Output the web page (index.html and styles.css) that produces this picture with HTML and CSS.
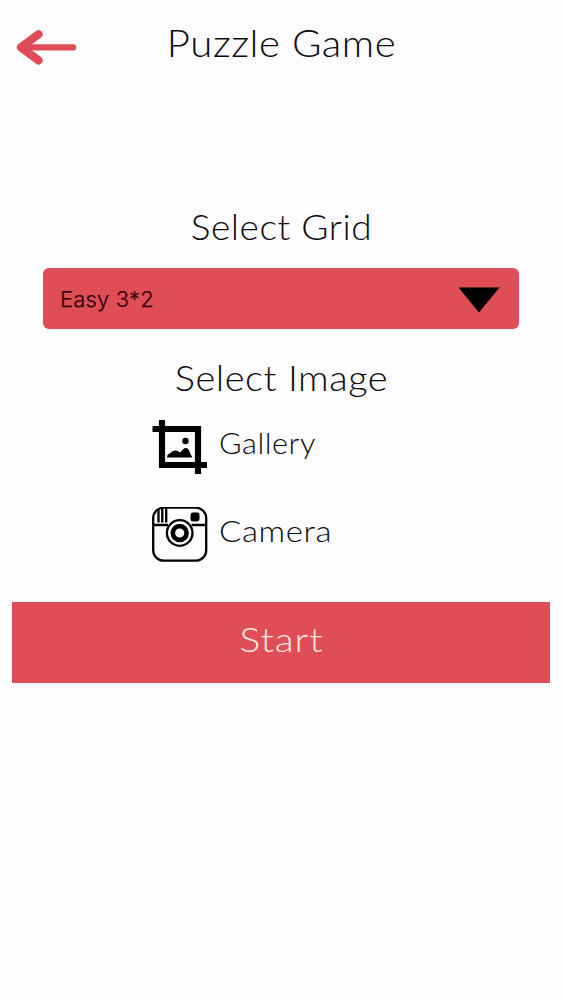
FILE: index.html
```html
<!DOCTYPE html>
<html lang="en">
<head>
<meta charset="utf-8">
<title>Puzzle Game</title>
<link rel="stylesheet" href="styles.css">
</head>
<body>
<main class="screen">
  <header class="header">
    <button class="back" aria-label="Back">
      <svg width="62" height="36" viewBox="0 0 62 36" fill="none" stroke="#df4c57" stroke-linecap="round" stroke-linejoin="round"><path d="M5 18.400H57" stroke-width="6.400"/><path d="M22.500 5.300L5 18.400L22.500 31.400" stroke-width="8.200"/><path d="M5 18.400L14 12V25Z" fill="#df4c57" stroke-width="4"/></svg>
    </button>
    <h1 class="title">Puzzle Game</h1>
  </header>
  <h2 class="heading grid-heading">Select Grid</h2>
  <button class="select">
    <span>Easy 3*2</span>
    <svg width="42" height="26" viewBox="0 0 42 26"><path d="M.5.500H41.500L21 25.500Z"/></svg>
  </button>
  <h2 class="heading image-heading">Select Image</h2>
  <div class="sources">
    <button class="source">
      <svg width="56" height="56" viewBox="0 0 56 56"><path fill="none" stroke="#000" stroke-width="6.200" d="M.5 10H46V55M10 1V46H55"/><circle cx="33.500" cy="22" r="3.200"/><path d="M15 38.500L15.500 36Q17 34.500 18.500 34Q20 31.500 23 31.500Q26 31.500 28 33.500L30.500 31Q32 28.500 34.500 29Q37 30 38 34L40.300 38.500Z"/></svg>
      <span class="gallery">Gallery</span>
    </button>
    <button class="source">
      <svg width="56" height="56" viewBox="0 0 56 56" fill="none" stroke="#000" stroke-width="2.300"><rect x="1.200" y=".7" width="53" height="53" rx="10.500"/><path d="M2 18H16M39.500 18H54M6.500 3V15.500M10.300 1.500V15.500M14.200 1.500V15.500"/><rect x="38.500" y="5.500" width="9" height="9" rx="2.400" fill="#000" stroke="none"/><circle cx="27.700" cy="26" r="12.800"/><circle cx="27.700" cy="26" r="6.900" stroke-width="4.600"/></svg>
      <span class="camera">Camera</span>
    </button>
  </div>
  <button class="start"><span>Start</span></button>
</main>
</body>
</html>
```
FILE: styles.css
```css
* { box-sizing: border-box; margin: 0; }

body {
  background: #fdfcfe;
  color: #0c0a0c;
  font-family: Lato, sans-serif;
  font-weight: 300;
}

button {
  border: 0;
  padding: 0;
  background: none;
  color: inherit;
  font: inherit;
}

svg { display: block; flex: none; }

.screen {
  display: flex;
  flex-direction: column;
  width: 563px;
  height: 1000px;
}

.header {
  display: grid;
  grid-template-columns: 85px 1fr 85px;
  align-items: center;
  height: 60px;
  margin-top: 12px;
}

.back { padding: 8px 0 0 16px; }

/* Headings use slightly extended letterforms. */
.title {
  font-size: 37px;
  font-weight: 300;
  line-height: 62px;
  letter-spacing: 0.500px;
  text-align: center;
  white-space: nowrap;
  transform: scaleX(1.085);
}

.heading {
  font-size: 35px;
  font-weight: 300;
  line-height: 44px;
  letter-spacing: 0.500px;
  text-align: center;
}

.grid-heading { margin-top: 132px; transform: scaleX(1.06); }

.select {
  display: flex;
  align-items: center;
  justify-content: space-between;
  width: 476px;
  height: 61px;
  margin: 20px 0 0 43px;
  padding: 0 19px 0 17px;
  border-radius: 6px;
  background: #df4d56;
  color: #2b060a;
  font: 300 22px/30px Inter, sans-serif;
  font-feature-settings: "calt" 0;
  letter-spacing: 0.150px;
  -webkit-text-stroke: 0.250px #2b060a;
}

.select svg { margin-top: 3px; }

.image-heading { margin-top: 26px; transform: scaleX(1.085); }

.sources {
  display: flex;
  flex-direction: column;
  gap: 32px;
  margin: 20px 0 0 152px;
}

.source {
  display: flex;
  align-items: center;
  gap: 11px;
  height: 56px;
  font-size: 29px;
  line-height: 36px;
}

.source span {
  margin-top: -8px;
  letter-spacing: 0.500px;
  transform-origin: left;
}

.gallery { transform: scaleX(1.06); }
.camera { transform: scaleX(1.14); }

.start {
  width: 538px;
  height: 81px;
  margin: 39px 0 0 12.400px;
  padding-bottom: 7px;
  background: #df4d56;
  color: #ffebe3;
  font-size: 33px;
  letter-spacing: 0.800px;
}

.start span {
  display: inline-block;
  transform: scaleX(1.18);
}
```
